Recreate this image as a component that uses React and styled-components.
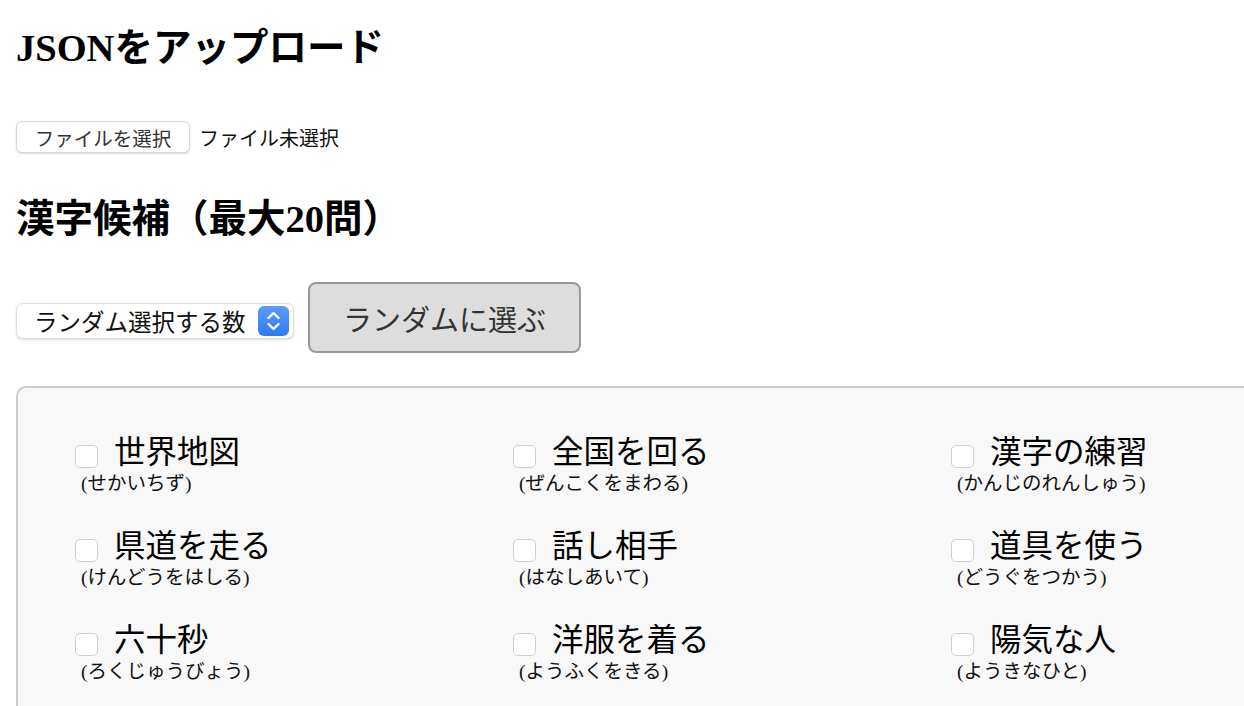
import React from 'react';
import styled, { createGlobalStyle } from 'styled-components';

const GlobalStyle = createGlobalStyle`
html, body {
  margin: 0;
  padding: 0;
  background: #ffffff;
  overflow: hidden;
}
body {
  font-family: "Liberation Serif", "Noto Sans CJK JP", serif;
  color: #000;
}
`;

const kanji = [
  { word: '世界地図', reading: 'せかいちず' },
  { word: '全国を回る', reading: 'ぜんこくをまわる' },
  { word: '漢字の練習', reading: 'かんじのれんしゅう' },
  { word: '県道を走る', reading: 'けんどうをはしる' },
  { word: '話し相手', reading: 'はなしあいて' },
  { word: '道具を使う', reading: 'どうぐをつかう' },
  { word: '六十秒', reading: 'ろくじゅうびょう' },
  { word: '洋服を着る', reading: 'ようふくをきる' },
  { word: '陽気な人', reading: 'ようきなひと' },
];

function Stepper() {
  return (
    <StepIcon>
      <svg width="31" height="30" viewBox="0 0 31 30">
        <defs>
          <linearGradient id="stp" x1="0" y1="0" x2="0" y2="1">
            <stop offset="0" stopColor="#5a9cf8" />
            <stop offset="1" stopColor="#2f7bf5" />
          </linearGradient>
        </defs>
        <rect x="0" y="0" width="31" height="30" rx="6" fill="url(#stp)" />
        <path d="M10.5 12 L15.5 7 L20.5 12" stroke="#fff" strokeWidth="2.4" fill="none" strokeLinecap="round" strokeLinejoin="round" />
        <path d="M10.5 18 L15.5 23 L20.5 18" stroke="#fff" strokeWidth="2.4" fill="none" strokeLinecap="round" strokeLinejoin="round" />
      </svg>
    </StepIcon>
  );
}

export default function App() {
  return (
    <Page>
      <GlobalStyle />
      <Title>JSONをアップロード</Title>
      <FileRow>
        <FileButton>ファイルを選択</FileButton>
        <FileName>ファイル未選択</FileName>
      </FileRow>
      <Subtitle>漢字候補（最大20問）</Subtitle>
      <Controls>
        <Select>
          <SelectText>ランダム選択する数</SelectText>
          <Stepper />
        </Select>
        <PickButton>ランダムに選ぶ</PickButton>
      </Controls>
      <Panel>
        <Grid>
          {kanji.map((k) => (
            <Item key={k.word}>
              <ItemTop>
                <Check />
                <Word>{k.word}</Word>
              </ItemTop>
              <Reading>({k.reading})</Reading>
            </Item>
          ))}
        </Grid>
      </Panel>
    </Page>
  );
}

const Page = styled.div`
padding: 0 0 0 16px;
`;
const Title = styled.h1`
margin: 26px 0 0;
font-size: 38.5px;
line-height: 44px;
font-weight: bold;
`;
const Subtitle = styled(Title)`
margin-top: 44px;
`;
const FileRow = styled.div`
margin-top: 51px;
display: flex;
align-items: center;
gap: 9px;
height: 32px;
font-family: "Noto Sans CJK JP", sans-serif;
`;
const FileButton = styled.div`
box-sizing: border-box;
width: 174px;
height: 32px;
display: flex;
align-items: center;
justify-content: center;
background: #fff;
border: 1px solid #d6d6d6;
border-radius: 6px;
box-shadow: 0 1px 2px rgba(0,0,0,0.15);
font-size: 19.5px;
color: #333;
`;
const FileName = styled.span`
font-size: 20px;
color: #111;
`;
const Controls = styled.div`
margin-top: 41px;
display: flex;
align-items: center;
gap: 14px;
font-family: "Noto Sans CJK JP", sans-serif;
`;
const Select = styled.div`
box-sizing: border-box;
width: 278px;
height: 36px;
margin-top: 6px;
display: flex;
align-items: center;
justify-content: space-between;
padding: 0 4px 0 17px;
background: #fff;
border: 1px solid #dedede;
border-radius: 7px;
box-shadow: 0 1px 2px rgba(0,0,0,0.15);
`;
const SelectText = styled.span`
font-size: 23.5px;
color: #111;
white-space: nowrap;
`;
const StepIcon = styled.span`
display: flex;
`;
const PickButton = styled.button`
box-sizing: border-box;
width: 273px;
height: 71px;
background: #dddddd;
border: 2px solid #999;
border-radius: 8px;
font-family: "Noto Sans CJK JP", sans-serif;
font-size: 29px;
color: #333;
padding: 0;
`;
const Panel = styled.div`
margin-top: 33px;
width: 1400px;
box-sizing: border-box;
background: #f8f8f8;
border: 2px solid #cccccc;
border-right: none;
border-bottom: none;
border-radius: 10px 0 0 0;
padding: 45px 0 40px 57px;
`;
const Grid = styled.div`
display: grid;
grid-template-columns: repeat(3, 438px);
row-gap: 32px;
`;
const Item = styled.div`
display: flex;
flex-direction: column;
`;
const ItemTop = styled.div`
display: flex;
align-items: center;
gap: 16px;
height: 40px;
`;
const Check = styled.span`
box-sizing: border-box;
width: 23px;
height: 23px;
margin-top: 6px;
background: #fff;
border: 1px solid #cfcfcf;
border-radius: 5px;
`;
const Word = styled.span`
font-size: 31.5px;
line-height: 40px;
color: #000;
`;
const Reading = styled.span`
padding-left: 6px;
font-size: 19.5px;
line-height: 22px;
color: #111;
`;
